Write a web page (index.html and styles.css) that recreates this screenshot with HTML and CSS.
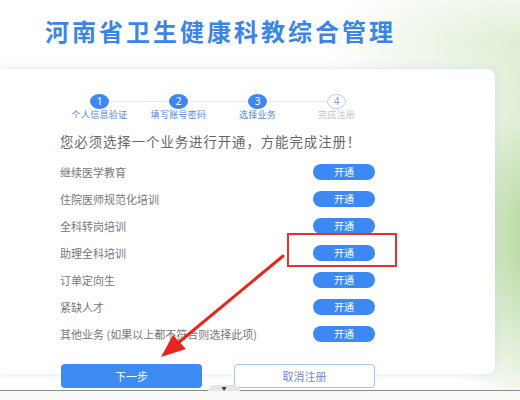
FILE: index.html
```html
<!DOCTYPE html>
<html lang="zh-CN">
<head>
<meta charset="utf-8">
<title>河南省卫生健康科教综合管理</title>
<link rel="stylesheet" href="styles.css">
</head>
<body>
<div class="page">
  <header class="header">
    <h1 class="title">河南省卫生健康科教综合管理</h1>
  </header>
  <main class="card">
    <ol class="steps">
      <li class="step done"><span class="dot">1</span><span class="label">个人信息验证</span></li>
      <li class="step done"><span class="dot">2</span><span class="label">填写账号密码</span></li>
      <li class="step done"><span class="dot">3</span><span class="label">选择业务</span></li>
      <li class="step todo"><span class="dot">4</span><span class="label">完成注册</span></li>
    </ol>
    <p class="notice">您必须选择一个业务进行开通，方能完成注册！</p>
    <ul class="biz">
      <li class="row"><span class="name">继续医学教育</span><button class="open">开通</button></li>
      <li class="row"><span class="name">住院医师规范化培训</span><button class="open">开通</button></li>
      <li class="row"><span class="name">全科转岗培训</span><button class="open">开通</button></li>
      <li class="row marked"><span class="name">助理全科培训</span><button class="open">开通</button><span class="redbox"></span></li>
      <li class="row"><span class="name">订单定向生</span><button class="open">开通</button></li>
      <li class="row"><span class="name">紧缺人才</span><button class="open">开通</button></li>
      <li class="row"><span class="name">其他业务 (如果以上都不符合则选择此项)</span><button class="open">开通</button></li>
    </ul>
    <div class="actions">
      <button class="btn primary">下一步</button>
      <button class="btn ghost">取消注册</button>
    </div>
  </main>
  <footer class="dock"><span class="tab">▼</span></footer>
  <svg class="arrow" width="520" height="400" viewBox="0 0 520 400" aria-hidden="true">
    <line x1="283" y1="256" x2="178" y2="343" stroke="#e8261c" stroke-width="3" stroke-linecap="round"/>
    <polygon points="161,357 173,335 186,349" fill="#e8261c"/>
  </svg>
</div>
</body>
</html>
```
FILE: styles.css
```css
* { box-sizing: border-box; }
html, body { margin: 0; padding: 0; }
body {
  width: 520px;
  height: 400px;
  overflow: hidden;
  font-family: "Noto Sans CJK SC", "Noto Sans", sans-serif;
  background:
    radial-gradient(ellipse 110px 190px at 540px 235px, rgba(168,208,140,0.95), rgba(168,208,140,0) 100%),
    radial-gradient(ellipse 220px 80px at 540px 45px, rgba(205,228,190,0.7), rgba(205,228,190,0) 100%),
    #ffffff;
}
.page {
  position: relative;
  width: 520px;
  height: 400px;
  display: flex;
  flex-direction: column;
}
.header {
  height: 69px;
  padding-left: 45px;
  display: flex;
  align-items: flex-start;
}
.title {
  margin: 17px 0 0;
  font-size: 24px;
  line-height: 28px;
  font-weight: 700;
  letter-spacing: 3px;
  color: #3a85e6;
}
.card {
  margin-left: -10px;
  width: 505px;
  height: 305px;
  background: #fff;
  border-radius: 8px;
  box-shadow: 0 0 10px rgba(170,185,220,0.35);
  padding: 25px 0 0 70px;
  display: flex;
  flex-direction: column;
}
.steps {
  list-style: none;
  margin: 0;
  padding: 0;
  display: flex;
}
.step {
  position: relative;
  width: 79px;
  display: flex;
  flex-direction: column;
  align-items: center;
}
.step + .step::before {
  content: "";
  position: absolute;
  top: 7px;
  right: calc(50% + 11px);
  width: 57px;
  height: 1px;
  background: #dfe7f5;
}
.dot {
  width: 19px;
  height: 15px;
  border-radius: 50%;
  background: #3d87f2;
  color: #fff;
  font-size: 10px;
  line-height: 15px;
  text-align: center;
  font-family: "Noto Sans", sans-serif;
}
.todo .dot {
  background: #fff;
  border: 1px solid #bcd0f2;
  color: #7e9bd6;
  line-height: 13px;
}
.label {
  margin-top: 1px;
  font-size: 9px;
  line-height: 10px;
  letter-spacing: 0.3px;
  color: #4f8ae0;
  white-space: nowrap;
}
.todo .label { color: #c3c7cf; }
.notice {
  margin: 12px 0 0;
  font-size: 13.4px;
  line-height: 18px;
  letter-spacing: 0.95px;
  color: #666;
  white-space: nowrap;
}
.biz {
  list-style: none;
  margin: 8px 0 0;
  padding: 0;
  width: 315px;
}
.row {
  position: relative;
  height: 27px;
  display: flex;
  align-items: center;
  justify-content: space-between;
}
.name {
  font-size: 11px;
  color: #777;
  white-space: nowrap;
}
.open {
  width: 62px;
  height: 16px;
  border: 0;
  border-radius: 8px;
  background: #3d89f4;
  color: #fff;
  font-family: inherit;
  font-size: 10px;
  line-height: 16px;
  padding: 0;
}
.redbox {
  position: absolute;
  left: 227px;
  top: -6px;
  width: 110px;
  height: 34px;
  border: 2px solid #e5332a;
}
.actions {
  margin: 17px 0 -15px 1px;
  display: flex;
  gap: 32px;
}
.btn {
  width: 141px;
  height: 24px;
  border-radius: 4px;
  font-family: inherit;
  font-size: 11px;
  padding: 0;
}
.primary {
  border: 0;
  background: #3d8bf3;
  color: #fff;
}
.ghost {
  border: 1px solid #aac4f0;
  background: #fff;
  color: #7388d4;
}
.dock {
  position: relative;
  margin-top: 16px;
  height: 10px;
  border-top: 1.5px solid #8c8c8c;
  background: #fafafa;
}
.tab {
  position: absolute;
  left: 208px;
  top: -6px;
  width: 32px;
  height: 6px;
  border-radius: 6px 6px 0 0;
  background: #e6e6e6;
  color: #333;
  font-size: 5px;
  line-height: 6px;
  text-align: center;
}
.arrow {
  position: absolute;
  left: 0;
  top: 0;
  pointer-events: none;
}
```
